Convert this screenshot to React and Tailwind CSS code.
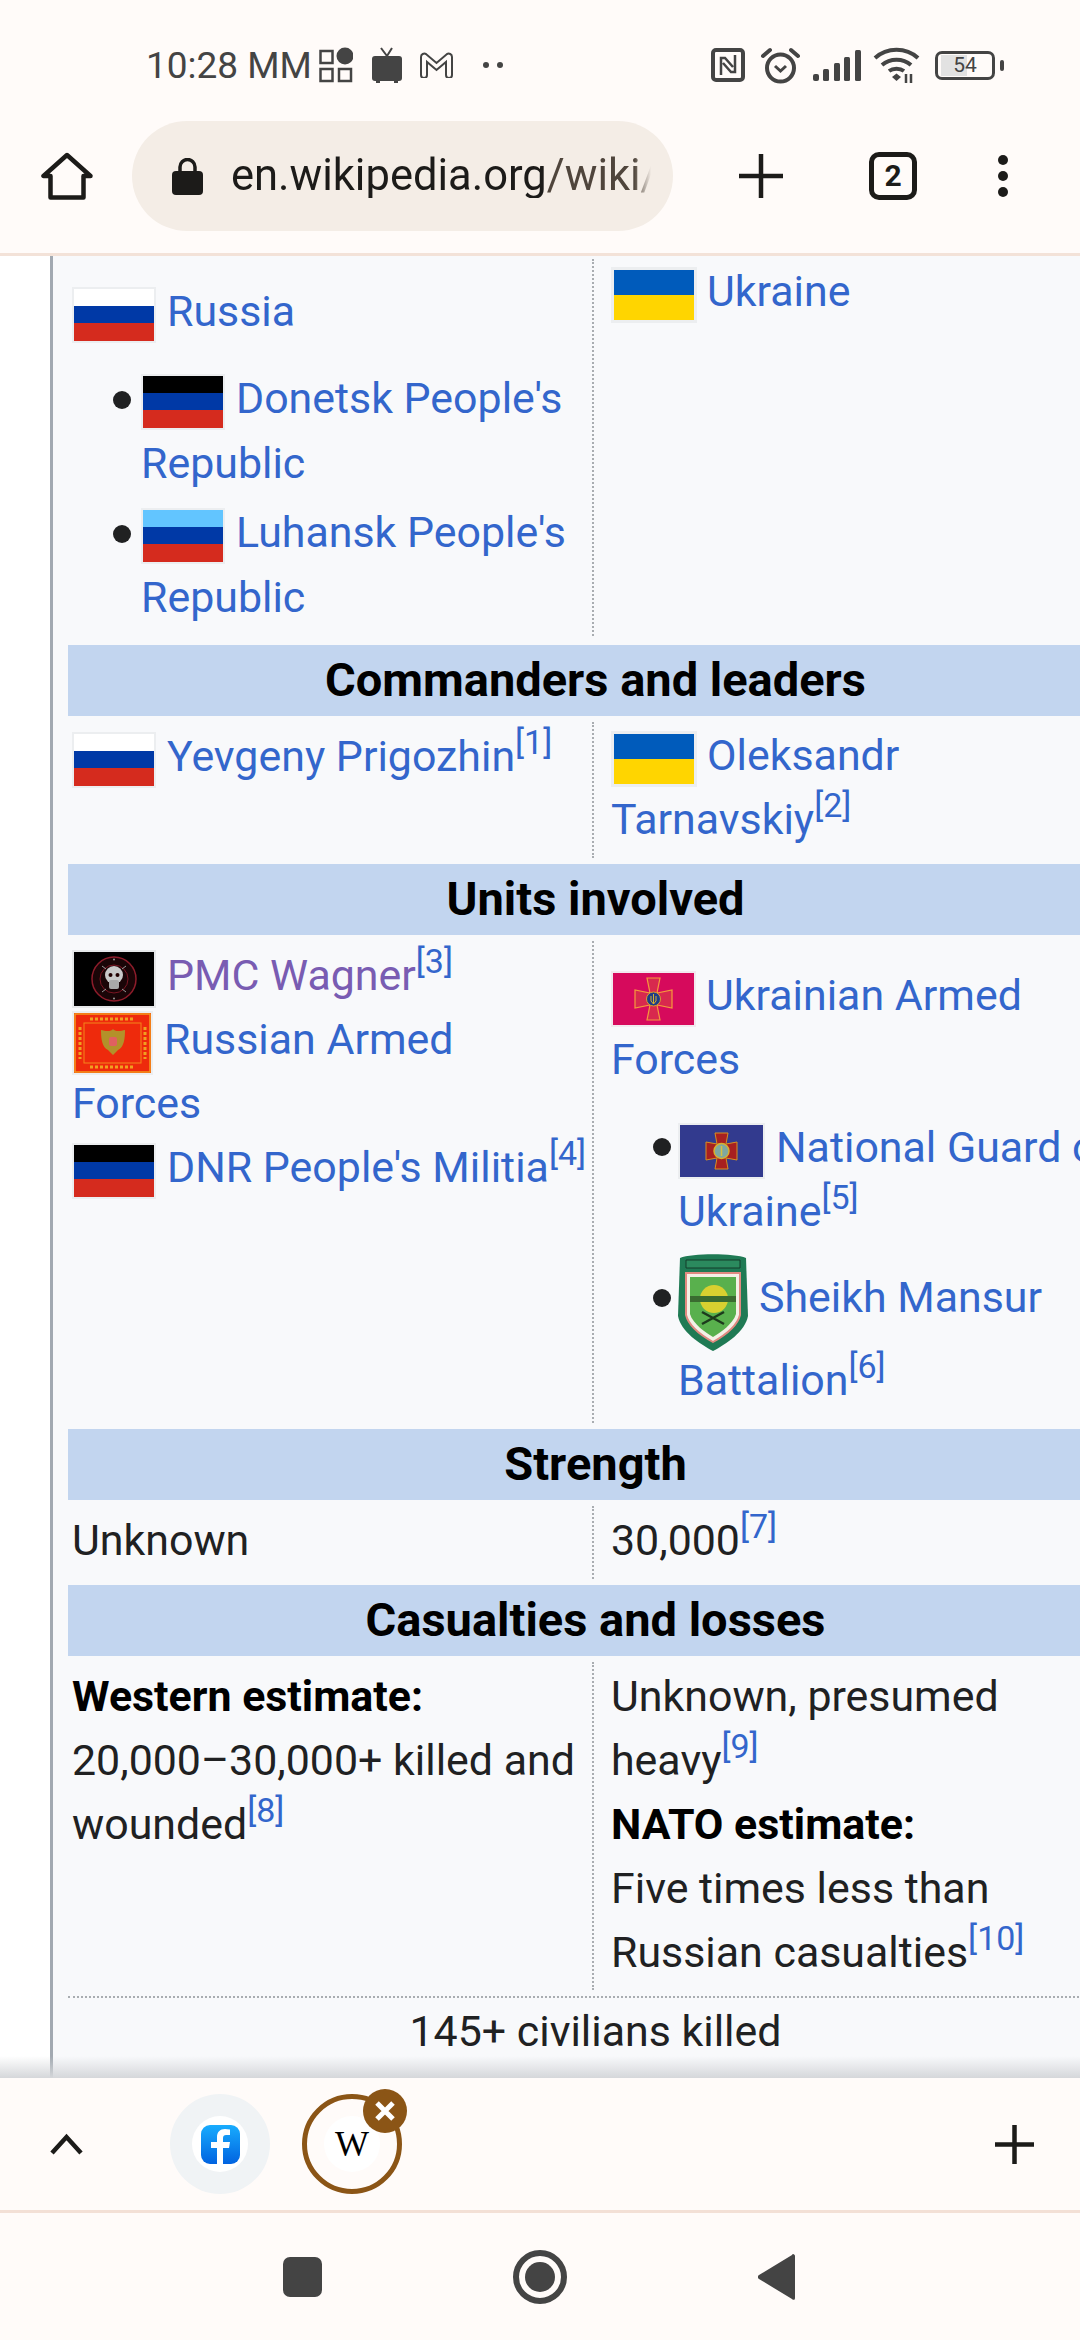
const Flag = ({ top, mid, bot }) => (
    <span className="inline-flex flex-col w-[84px] h-[56px] border-2 border-[#eceef0] align-middle mr-[11px]">
        <span className="flex-1" style={{ background: top }} />
        <span className="flex-1" style={{ background: mid }} />
        <span className="flex-1" style={{ background: bot }} />
    </span>
);

const RussiaFlag = () => <Flag top="#ffffff" mid="#0039a6" bot="#d52b1e" />;
const DonetskFlag = () => <Flag top="#000000" mid="#0039a6" bot="#d52b1e" />;
const LuhanskFlag = () => <Flag top="#62c5ff" mid="#0039a6" bot="#d52b1e" />;

const UkraineFlag = () => (
    <span className="inline-flex flex-col w-[86px] h-[56px] border-[3px] border-[#eceef0] align-middle mr-[10px]">
        <span className="flex-1 bg-[#005bbb]" />
        <span className="flex-1 bg-[#ffd500]" />
    </span>
);

const WagnerFlag = () => (
    <svg className="inline-block align-middle mr-[11px] my-[-1px]" width="84" height="58" viewBox="0 0 84 58">
        <rect x="1" y="1" width="82" height="56" fill="#000" stroke="#e6e8ea" strokeWidth="2" />
        <circle cx="42" cy="29" r="22" fill="#1a0507" stroke="#8c1c2a" strokeWidth="1.500" />
        <circle cx="42" cy="29" r="14" fill="none" stroke="#7a1522" strokeWidth="1" />
        <circle cx="42" cy="25" r="9" fill="#c9c9c9" />
        <rect x="37" y="30" width="10" height="9" rx="2" fill="#a8a8a8" />
        <circle cx="38.500" cy="25" r="2" fill="#200" />
        <circle cx="45.500" cy="25" r="2" fill="#200" />
        <circle cx="42" cy="9.500" r="1" fill="#999" />
        <circle cx="42" cy="48.500" r="1" fill="#999" />
        <path d="M30 16l4 3M54 16l-4 3M30 42l4-3M54 42l-4-3" stroke="#999" strokeWidth="1" />
    </svg>
);

const RussianArmedFlag = () => (
    <svg className="inline-block align-middle mr-[11px] my-[-4px]" width="81" height="64" viewBox="0 0 81 64">
        <rect x="1" y="1" width="79" height="62" fill="#ee2a0c" stroke="#eceef0" strokeWidth="2" />
        <rect x="3" y="3" width="75" height="58" fill="none" stroke="#f59a1c" strokeWidth="1.500" />
        <rect x="12" y="12" width="57" height="40" fill="none" stroke="#f4861a" strokeWidth="1" />
        <path d="M18 8h45M18 56h45M8 16v32M73 16v32" stroke="#f0a020" strokeWidth="3" strokeDasharray="3 2" />
        <path d="M41 18c-2 3-8 2-12 1 0 9 1 17 7 20l5 5 5-5c6-3 7-11 7-20-4 1-10 2-12-1z" fill="#b3912a" />
        <rect x="37" y="26" width="8" height="9" rx="2" fill="#e06060" />
    </svg>
);

const UaArmedFlag = () => (
    <svg className="inline-block align-middle mr-[10px]" width="85" height="56" viewBox="0 0 85 56">
        <rect x="1" y="1" width="83" height="54" fill="#d60a5c" stroke="#f2e9ee" strokeWidth="2" />
        <path d="M36 7h13l-3 15 15-3v18l-15-3 3 15H36l3-15-15 3V19l15 3z" fill="#d8294e" stroke="#f59a3c" strokeWidth="1.200" />
        <circle cx="42.500" cy="28" r="7" fill="#1f3d86" stroke="#d8a030" strokeWidth="1" />
        <path d="M42.500 23v10M40 25v5l2.500 3 2.500-3v-5" fill="none" stroke="#d8b030" strokeWidth="1" />
    </svg>
);

const GuardFlag = () => (
    <svg className="inline-block align-middle mr-[11px]" width="87" height="56" viewBox="0 0 87 56">
        <rect x="1" y="1" width="85" height="54" fill="#323a8e" stroke="#eceef0" strokeWidth="2" />
        <path d="M37 10h13l-2 11 11-2v18l-11-2 2 11H37l2-11-11 2V19l11 2z" fill="#a82020" stroke="#d89020" strokeWidth="1" />
        <circle cx="43.500" cy="28" r="7.500" fill="#7fa8a0" stroke="#d8b030" strokeWidth="1.500" />
        <path d="M43.500 23v10" stroke="#d8c040" strokeWidth="1.500" />
    </svg>
);

const MansurShield = () => (
    <svg className="inline-block align-middle mr-[11px] mt-[-2px] mb-[-4px]" width="70" height="100" viewBox="0 0 70 100">
        <path d="M2 6c12-5 54-5 66 0l2 58c-3 16-22 28-35 35C22 92 3 80 0 64z" fill="#1f7a54" />
        <path d="M8 21h54v42c-3 12-18 22-27 27C26 85 11 75 8 63z" fill="#f4f1e6" stroke="#e08a80" strokeWidth="2" />
        <path d="M12 25h46v37c-3 10-15 18-23 23-8-5-20-13-23-23z" fill="#59b04d" />
        <circle cx="36" cy="47" r="14" fill="#d8d030" />
        <rect x="12" y="44" width="46" height="6" fill="#3a6b30" />
        <path d="M24 72l22-12M46 72L24 60" stroke="#1c3a1c" strokeWidth="2.500" />
        <path d="M8 8h54v8H8z" fill="#2b8a5e" stroke="#143c2a" strokeWidth="1" />
    </svg>
);

const Ref = ({ n }) => (
    <sup className="text-[34px] leading-none text-[#3366cc]">[{n}]</sup>
);

const A = ({ children }) => <span className="text-[#3366cc]">{children}</span>;

const Bullet = ({ pos }) => (
    <span className={`absolute w-[18px] h-[18px] rounded-full bg-[#202122] ${pos}`} />
);

const SectionBar = ({ children }) => (
    <div className="h-[71px] pb-[2px] bg-[#c2d5ef] flex items-center justify-center text-[47px] font-bold text-[#000]">
        {children}
    </div>
);

const Row = ({ left, right, height }) => (
    <div className={`grid grid-cols-[524px_1fr] ${height}`}>
        <div className="pl-[4px]">{left}</div>
        <div className="py-[6px]">
            <div className="h-full border-l-2 border-dotted border-[#a9adb1] pl-[17px]">{right}</div>
        </div>
    </div>
);

const StatusBar = () => (
    <div className="flex items-center h-[94px] pt-[36px] pl-[146px] text-[#444444]">
        <span className="text-[37px] leading-none w-[173px] whitespace-nowrap">10:28 MM</span>
        <svg width="34" height="36" viewBox="0 0 34 36" fill="none" stroke="#444" strokeWidth="2.500">
            <rect x="1.500" y="4" width="12" height="12" />
            <circle cx="26" cy="9" r="8.500" fill="#444" stroke="none" />
            <rect x="1.500" y="22" width="12" height="12" />
            <rect x="20" y="22" width="12" height="12" />
        </svg>
        <svg className="ml-[19px]" width="30" height="36" viewBox="0 0 30 36" fill="#444">
            <path d="M9 1l6 8 5-8" fill="none" stroke="#444" strokeWidth="2" />
            <rect x="0" y="9" width="30" height="25" rx="3" />
            <rect x="4" y="33" width="4" height="3" />
            <rect x="22" y="33" width="4" height="3" />
        </svg>
        <svg className="ml-[18px]" width="33" height="26" viewBox="0 0 33 26" fill="none" stroke="#444" strokeWidth="2">
            <path d="M1 5v18a2 2 0 0 0 6 0V10l9.500 8L26 10v13a2 2 0 0 0 6 0V5c0-3-3-4-5-3l-10.500 9L6 2C4 1 1 2 1 5z" />
        </svg>
        <div className="flex gap-[8px] ml-[30px]">
            <span className="w-[6px] h-[6px] rounded-full bg-[#444]" />
            <span className="w-[6px] h-[6px] rounded-full bg-[#444]" />
        </div>
        <svg className="ml-[208px]" width="34" height="34" viewBox="0 0 34 34" fill="none" stroke="#444">
            <rect x="2" y="2" width="30" height="30" rx="3" strokeWidth="4" />
            <path d="M10 27V10h4l8 9M24 7v17h-4l-8-9" strokeWidth="2.500" />
        </svg>
        <svg className="ml-[15px]" width="41" height="37" viewBox="0 0 41 37" fill="none" stroke="#444" strokeWidth="4">
            <circle cx="20.500" cy="21" r="13.500" />
            <path d="M3 9l7-6M38 9l-7-6" strokeLinecap="round" />
            <path d="M15 19l5.500 5 5.500-5" strokeWidth="3" />
        </svg>
        <svg className="ml-[12px]" width="48" height="31" viewBox="0 0 48 31" fill="#444">
            <rect x="0" y="24" width="6" height="7" rx="2" />
            <rect x="10" y="19" width="6" height="12" rx="1.500" />
            <rect x="21" y="13" width="6" height="18" rx="1.500" />
            <rect x="31" y="7" width="6" height="24" rx="1.500" />
            <rect x="42" y="0" width="6" height="31" rx="1.500" />
        </svg>
        <svg className="ml-[12px]" width="47" height="36" viewBox="0 0 47 36" fill="none" stroke="#444" strokeWidth="4">
            <path d="M2 11c12-11 31-11 43 0M9 18c8-7 21-7 29 0M16 24c4-3 11-3 15 0" />
            <path d="M19 30l4.500-3.500L28 30l-4.500 4z" fill="#444" stroke="none" />
            <path d="M33 27v9M38 27v9" strokeWidth="2.500" />
        </svg>
        <div className="ml-[15px] w-[60px] h-[29px] border-[3px] border-[#444] rounded-[7px] relative flex items-center overflow-hidden">
            <span className="h-[21px] w-[26px] ml-[3px] bg-[#e2e2e2]" />
            <span className="absolute inset-0 flex items-center justify-center text-[21px] leading-none">54</span>
        </div>
        <span className="ml-[5px] w-[4px] h-[11px] rounded-full bg-[#444]" />
    </div>
);

const Toolbar = () => (
    <div className="flex items-center h-[110px] mt-[27px] pl-[41px]">
        <svg width="52" height="48" viewBox="0 0 52 48" fill="none" stroke="#1c1b19" strokeWidth="4.500" strokeLinejoin="round">
            <path d="M26 3L2.500 24h7v21.500h33V24h7z" />
        </svg>
        <div className="ml-[39px] w-[541px] h-[110px] rounded-full bg-[#f4ede6] flex items-center pl-[40px]">
            <svg width="31" height="37" viewBox="0 0 31 37" fill="#1c1b19">
                <path d="M8 15V9a7.500 7.500 0 0 1 15 0v6" fill="none" stroke="#1c1b19" strokeWidth="3.500" />
                <rect x="0" y="13" width="31" height="24" rx="4" />
            </svg>
            <div className="ml-[28px] w-[420px] overflow-hidden whitespace-nowrap text-[43.5px] leading-none text-[#1c1b19] [mask-image:linear-gradient(to_right,black_96%,transparent)]">
                en.wikipedia.org<span className="text-[#4f453c]">/wiki/</span>
            </div>
        </div>
        <svg className="ml-[65px]" width="46" height="46" viewBox="0 0 46 46" stroke="#1c1b19" strokeWidth="4.500">
            <path d="M23 1v44M1 23h44" />
        </svg>
        <div className="ml-[85px] w-[48px] h-[48px] border-[5px] border-[#1c1b19] rounded-[10px] flex items-center justify-center text-[30px] font-bold leading-none text-[#1c1b19]">
            2
        </div>
        <div className="ml-[81px] flex flex-col gap-[6px]">
            <span className="w-[10px] h-[10px] rounded-full bg-[#1c1b19]" />
            <span className="w-[10px] h-[10px] rounded-full bg-[#1c1b19]" />
            <span className="w-[10px] h-[10px] rounded-full bg-[#1c1b19]" />
        </div>
    </div>
);

const TabBar = () => (
    <div className="h-[132px] flex items-center pl-[50px] pr-[46px] bg-[#fffbf9]">
        <svg width="33" height="22" viewBox="0 0 33 22" fill="none" stroke="#1c1b19" strokeWidth="4.500">
            <path d="M2 20L16.500 4 31 20" />
        </svg>
        <div className="ml-[87px] w-[100px] h-[100px] rounded-full bg-[#f0f3f5] flex items-center justify-center">
            <div className="w-[56px] h-[56px] rounded-full bg-white flex items-center justify-center">
                <svg width="39" height="39" viewBox="0 0 39 39">
                    <defs>
                        <linearGradient id="fb" x1="0" y1="0" x2="0" y2="1">
                            <stop offset="0" stopColor="#18acfe" />
                            <stop offset="1" stopColor="#0163e0" />
                        </linearGradient>
                    </defs>
                    <rect width="39" height="39" rx="9" fill="url(#fb)" />
                    <path d="M22 39V23h6l1-6h-7v-4c0-2 1-3 3-3h4V4.500c-2-.3-3.500-.5-5-.5-5 0-8 3-8 8v5h-6v6h6v16z" fill="#fff" />
                </svg>
            </div>
        </div>
        <div className="ml-[32px] relative w-[100px] h-[100px] rounded-full border-[5px] border-[#8b5516] flex items-center justify-center">
            <div className="w-[56px] h-[56px] rounded-full bg-white flex items-center justify-center text-[36px] leading-none text-black font-['Liberation_Serif',serif]">
                W
            </div>
            <div className="absolute top-[-10px] right-[-10px] w-[44px] h-[44px] rounded-full bg-[#8b5516] flex items-center justify-center">
                <svg width="22" height="22" viewBox="0 0 22 22" stroke="#fff" strokeWidth="5">
                    <path d="M3 3l16 16M19 3L3 19" />
                </svg>
            </div>
        </div>
        <svg className="ml-auto" width="39" height="39" viewBox="0 0 39 39" stroke="#1c1b19" strokeWidth="4.500">
            <path d="M19.500 0v39M0 19.500h39" />
        </svg>
    </div>
);

const NavBar = () => (
    <div className="flex-1 flex items-center pl-[283px] bg-[#fffbf9] border-t-[3px] border-[#f3e0d6]">
        <div className="w-[39px] h-[40px] rounded-[7px] bg-[#444444]" />
        <div className="ml-[191px] w-[54px] h-[54px] rounded-full border-[6px] border-[#444444] flex items-center justify-center">
            <div className="w-[30px] h-[30px] rounded-full bg-[#444444]" />
        </div>
        <svg className="ml-[191px]" width="37" height="46" viewBox="0 0 37 46" fill="#444444">
            <path d="M35 0c1 0 2 1 2 2v42c0 2-1.500 2.500-3 1L1 25c-1.500-1-1.500-3 0-4L34 1c.300-.500.600-1 1-1z" />
        </svg>
    </div>
);

const Infobox = () => (
    <div className="w-[1073px] shrink-0 border-l-[3px] border-[#a2a9b1] bg-[#f8f9fb] pl-[15px] text-[42.9px] leading-[64px] text-[#202122]">
        <Row
            height="h-[389px]"
            left={
                <div className="pt-[23px]">
                    <div><RussiaFlag /><A>Russia</A></div>
                    <div className="pl-[69px] mt-[23px] leading-[65px] w-[510px]">
                        <div className="relative"><Bullet pos="left-[-28px] top-[25px]" /><DonetskFlag /><A>Donetsk People's<br />Republic</A></div>
                        <div className="relative mt-[4px]"><Bullet pos="left-[-28px] top-[25px]" /><LuhanskFlag /><A>Luhansk People's<br />Republic</A></div>
                    </div>
                </div>
            }
            right={<div className="mt-[-3px]"><UkraineFlag /><A>Ukraine</A></div>}
        />
        <SectionBar>Commanders and leaders</SectionBar>
        <Row
            height="h-[148px]"
            left={<div className="pt-[8px]"><RussiaFlag /><A>Yevgeny Prigozhin</A><Ref n="1" /></div>}
            right={<div className="pt-[1px]"><UkraineFlag /><A>Oleksandr<br />Tarnavskiy</A><Ref n="2" /></div>}
        />
        <SectionBar>Units involved</SectionBar>
        <Row
            height="h-[494px]"
            left={
                <div className="pt-[8px]">
                    <div><WagnerFlag /><span className="text-[#795cb2]">PMC Wagner</span><Ref n="3" /></div>
                    <div><RussianArmedFlag /><A>Russian Armed<br />Forces</A></div>
                    <div><DonetskFlag /><A>DNR People's Militia</A><Ref n="4" /></div>
                </div>
            }
            right={
                <div className="pt-[22px]">
                    <div><UaArmedFlag /><A>Ukrainian Armed<br />Forces</A></div>
                    <div className="pl-[67px] mt-[24px]">
                        <div className="relative whitespace-nowrap"><Bullet pos="left-[-25px] top-[23px]" /><GuardFlag /><A>National Guard of<br />Ukraine</A><Ref n="5" /></div>
                        <div className="relative mt-[11px]"><Bullet pos="left-[-25px] top-[35px]" /><MansurShield /><A>Sheikh Mansur<br />Battalion</A><Ref n="6" /></div>
                    </div>
                </div>
            }
        />
        <SectionBar>Strength</SectionBar>
        <Row
            height="h-[85px]"
            left={<div className="pt-[8px]">Unknown</div>}
            right={<div className="pt-[2px]">30,000<Ref n="7" /></div>}
        />
        <SectionBar>Casualties and losses</SectionBar>
        <Row
            height="h-[340px]"
            left={
                <div className="pt-[8px]">
                    <b className="text-[#000]">Western estimate:</b><br />
                    20,000–30,000+ killed and<br />
                    wounded<Ref n="8" />
                </div>
            }
            right={
                <div className="pt-[2px]">
                    Unknown, presumed<br />
                    heavy<Ref n="9" /><br />
                    <b className="text-[#000]">NATO estimate:</b><br />
                    Five times less than<br />
                    Russian casualties<Ref n="10" />
                </div>
            }
        />
        <div className="border-t-2 border-dotted border-[#a9adb1] text-center pt-[1px] h-[82px]">145+ civilians killed</div>
    </div>
);

const App = () => {
    return (
        <div className="w-[1080px] h-[2340px] flex flex-col overflow-hidden bg-[#fffbf9] font-['Roboto',sans-serif]">
            <header className="h-[256px] shrink-0 border-b-[3px] border-[#f3e2d8]">
                <StatusBar />
                <Toolbar />
            </header>
            <main className="relative h-[1822px] shrink-0 flex overflow-hidden bg-white pl-[50px]">
                <Infobox />
                <div className="absolute left-0 right-0 bottom-0 h-[22px] bg-gradient-to-b from-transparent to-[#d5d7da]" />
            </main>
            <TabBar />
            <NavBar />
        </div>
    );
};

export default App;
